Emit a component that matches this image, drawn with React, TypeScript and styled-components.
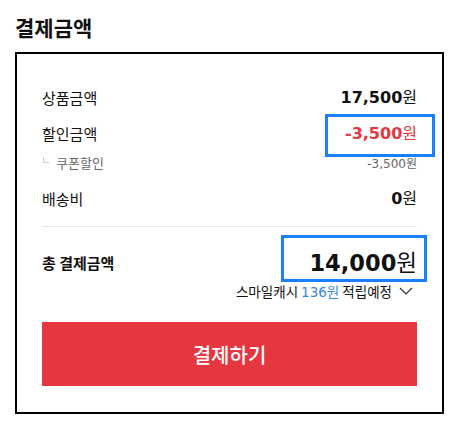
import React from 'react';
import styled, { createGlobalStyle } from 'styled-components';

const GlobalStyle = createGlobalStyle`
  html, body {
    margin: 0;
    padding: 0;
    background: #fff;
  }
  body {
    font-family: "DejaVu Sans", "Noto Sans CJK KR", sans-serif;
    color: #111;
  }
`;

const Page = styled.div`
  width: 466px;
  padding: 13px 22px 0 15px;
  box-sizing: border-box;
`;

const Title = styled.h2`
  margin: 0 0 11px;
  font-family: "Noto Sans CJK KR", sans-serif;
  font-size: 21px;
  font-weight: 700;
  line-height: 28px;
  color: #111;
`;

const Panel = styled.section`
  border: 2px solid #000;
  padding: 25px 25px 26px;
`;

const Row = styled.div<{ $h: number; $mt?: number }>`
  display: flex;
  align-items: center;
  justify-content: space-between;
  height: ${(p) => p.$h}px;
  margin-top: ${(p) => p.$mt ?? 0}px;
`;

const Label = styled.span<{ $bold?: boolean }>`
  font-family: "Noto Sans CJK KR", sans-serif;
  font-size: 15px;
  font-weight: ${(p) => (p.$bold ? 700 : 400)};
  color: #111;
`;

const SubLabel = styled.span`
  display: flex;
  align-items: center;
  font-family: "Noto Sans CJK KR", sans-serif;
  font-size: 13px;
  color: #666;
  &::before {
    content: '';
    width: 5px;
    height: 5px;
    margin: -4px 7px 0 1px;
    border-left: 1px solid #ccc;
    border-bottom: 1px solid #ccc;
  }
`;

const Amount = styled.span<{ $size: number; $color?: string }>`
  position: relative;
  display: inline-block;
  font-size: ${(p) => p.$size}px;
  line-height: ${(p) => Math.round(p.$size * 1.2)}px;
  font-weight: 700;
  color: ${(p) => p.$color ?? '#111'};
  white-space: nowrap;
  b {
    font-weight: 700;
  }
  em {
    font-style: normal;
    font-weight: 400;
    font-family: "Noto Sans CJK KR", sans-serif;
  }
`;

const Highlight = styled.span<{ $t: number; $r: number; $b: number; $l: number }>`
  position: absolute;
  top: ${(p) => p.$t}px;
  right: ${(p) => p.$r}px;
  bottom: ${(p) => p.$b}px;
  left: ${(p) => p.$l}px;
  border: 3px solid #1a80ff;
  pointer-events: none;
`;

const SubAmount = styled.span`
  font-size: 12px;
  color: #666;
  em {
    font-style: normal;
    font-family: "Noto Sans CJK KR", sans-serif;
  }
`;

const Divider = styled.hr`
  margin: 10px 0 0;
  border: 0;
  border-top: 1px solid #e6e6e6;
`;

const CashRow = styled.div`
  display: flex;
  justify-content: flex-end;
  align-items: center;
  gap: 7px;
  height: 18px;
  padding-right: 4px;
  font-family: "Noto Sans CJK KR", sans-serif;
  font-size: 13.5px;
  color: #111;
  span.num {
    color: #3a86e0;
  }
  i {
    font-family: "DejaVu Sans", sans-serif;
    font-style: normal;
  }
`;

const PayButton = styled.button`
  display: block;
  width: 100%;
  height: 64px;
  margin-top: 22px;
  border: 0;
  background: #e63740;
  color: #fff;
  font-family: "Noto Sans CJK KR", sans-serif;
  font-size: 20px;
  font-weight: 500;
  cursor: pointer;
`;

const Chevron = () => (
  <svg width="14" height="8" viewBox="0 0 14 8">
    <polyline points="1,1 7,7 13,1" fill="none" stroke="#333" strokeWidth="1.2" />
  </svg>
);

const App: React.FC = () => {
  return (
    <>
      <GlobalStyle />
      <Page>
        <Title>결제금액</Title>
        <Panel>
          <Row $h={36}>
            <Label>상품금액</Label>
            <Amount $size={16}>
              <b>17,500</b>
              <em>원</em>
            </Amount>
          </Row>
          <Row $h={36}>
            <Label>할인금액</Label>
            <Amount $size={16} $color="#e63740">
              <b>-3,500</b>
              <em>원</em>
              <Highlight $t={-9} $r={-18} $b={-14} $l={-20} />
            </Amount>
          </Row>
          <Row $h={22}>
            <SubLabel>쿠폰할인</SubLabel>
            <SubAmount>
              -3,500<em>원</em>
            </SubAmount>
          </Row>
          <Row $h={36} $mt={7}>
            <Label>배송비</Label>
            <Amount $size={16}>
              <b>0</b>
              <em>원</em>
            </Amount>
          </Row>
          <Divider />
          <Row $h={40} $mt={15}>
            <Label $bold>총 결제금액</Label>
            <Amount $size={22.5}>
              <b>14,000</b>
              <em>원</em>
              <Highlight $t={-13} $r={-10} $b={-5} $l={-28} />
            </Amount>
          </Row>
          <CashRow>
            <span>
              스마일캐시 <span className="num"><i>136</i>원</span> 적립예정
            </span>
            <Chevron />
          </CashRow>
          <PayButton type="button">결제하기</PayButton>
        </Panel>
      </Page>
    </>
  );
};

export default App;
